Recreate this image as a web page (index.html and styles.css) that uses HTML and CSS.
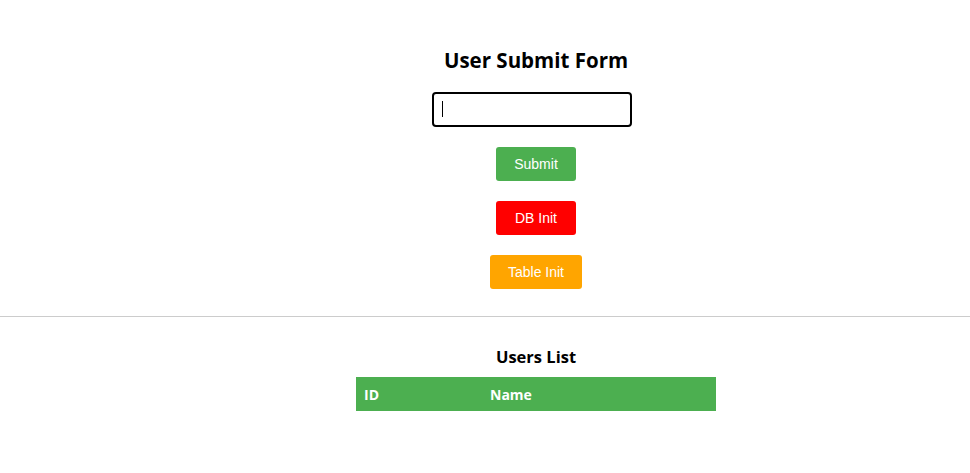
FILE: index.html
```html
<!DOCTYPE html>
<html>
<head>
<meta charset="utf-8">
<link rel="stylesheet" href="styles.css">
</head>
<body>
<section class="form-section">
  <h2 class="title">User Submit Form</h2>
  <div class="input-wrap">
    <input class="name-input" type="text" autofocus>
    <span class="caret"></span>
  </div>
  <button class="btn btn-green">Submit</button>
  <button class="btn btn-red">DB Init</button>
  <button class="btn btn-orange">Table Init</button>
</section>
<hr class="divider">
<section class="list-section">
  <h3 class="subtitle">Users List</h3>
  <table class="users">
    <thead>
      <tr><th class="col-id">ID</th><th>Name</th></tr>
    </thead>
    <tbody></tbody>
  </table>
</section>
</body>
</html>
```
FILE: styles.css
```css
html, body {
  margin: 0;
  padding: 0;
  background: #fff;
  font-family: "Open Sans", "Noto Sans", sans-serif;
}
.form-section {
  margin-left: 102px;
  padding-top: 44px;
  display: flex;
  flex-direction: column;
  align-items: center;
}
.title {
  margin: 0 0 16px;
  font-size: 20.5px;
  line-height: 32px;
  font-weight: 700;
  color: #000;
}
.input-wrap {
  position: relative;
  margin-right: 9px;
  margin-bottom: 20px;
  height: 35px;
}
.name-input {
  display: block;
  box-sizing: border-box;
  width: 200px;
  height: 35px;
  border: 2px solid #000;
  border-radius: 4px;
  padding: 0 8px;
  font-size: 14px;
  outline: none;
  caret-color: transparent;
}
.caret {
  position: absolute;
  left: 10px;
  top: 9px;
  width: 1px;
  height: 16px;
  background: #000;
}
.btn {
  font-family: "Liberation Sans", Arial, sans-serif;
  font-size: 14px;
  line-height: 16px;
  color: #fff;
  border: none;
  border-radius: 3px;
  padding: 9px 18px;
  min-width: 80px;
  margin-bottom: 20px;
}
.btn-green { background: #4caf50; }
.btn-red { background: #ff0000; }
.btn-orange { background: #ffa500; }
.divider {
  margin: 7px 0 0;
  border: none;
  border-top: 1px solid #ccc;
}
.list-section {
  margin-left: 102px;
  padding-top: 28px;
  display: flex;
  flex-direction: column;
  align-items: center;
}
.subtitle {
  margin: 0 0 8px;
  font-size: 16.5px;
  line-height: 24px;
  font-weight: 700;
}
.users {
  width: 360px;
  border-collapse: collapse;
}
.users th {
  background: #4caf50;
  color: #fff;
  text-align: left;
  padding: 0 8px;
  height: 34px;
  font-size: 14px;
  font-weight: 700;
}
.users .col-id { width: 35%; box-sizing: border-box; }
```
